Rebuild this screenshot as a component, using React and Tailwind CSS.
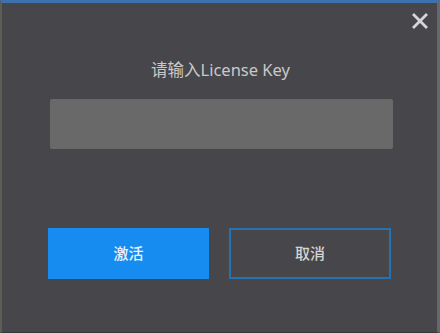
import React from 'react';

const App = () => {
    const font = { fontFamily: '"Noto Sans", "Noto Sans CJK SC", sans-serif' };

    return (
        <div
            className="relative h-[333px] w-[440px] overflow-hidden bg-[#47464b] border-t-[3px] border-t-[#3d72ad] border-l-2 border-l-[#5b5e55] border-r-[3px] border-r-[#65696e] border-b border-b-[#38373b]"
            style={font}
        >
            <button className="absolute top-[8px] right-[7px] flex h-[20px] w-[20px] items-center justify-center text-[#d6d6d6]">
                <svg width="16" height="16" viewBox="0 0 16 16">
                    <path d="M2 2 L14 14 M14 2 L2 14" stroke="currentColor" strokeWidth="2.8" strokeLinecap="square" />
                </svg>
            </button>

            <div className="flex flex-col pt-[56px]">
                <p className="text-center text-[16.5px] leading-[22px] text-[#c9c9c9] pl-[2px]">请输入License Key</p>

                <div className="ml-[48px] mt-[18px] h-[50px] w-[343px] rounded-[2px] bg-[#696969]" />

                <div className="ml-[46px] mt-[79px] flex gap-[20px]">
                    <button className="flex h-[51px] w-[161px] items-center justify-center bg-[#178cf0] text-[15px] font-medium text-[#e8f2fc]">
                        激活
                    </button>
                    <button className="flex h-[51px] w-[162px] items-center justify-center border-2 border-[#2372b2] bg-transparent text-[15px] font-medium text-[#d4d4d4]">
                        取消
                    </button>
                </div>
            </div>
        </div>
    );
};

export default App;
